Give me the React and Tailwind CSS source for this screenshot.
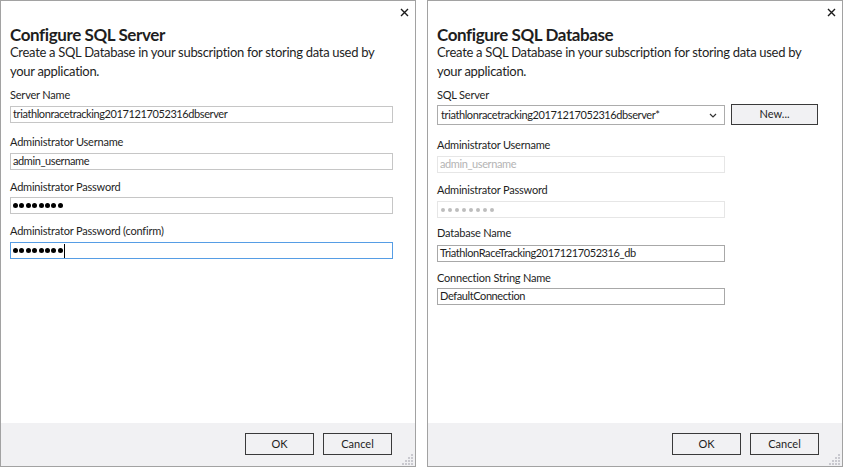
import React from 'react';

const font = { fontFamily: 'Lato, "Open Sans", sans-serif' };

function CloseX() {
  return (
    <svg width="9" height="9" viewBox="0 0 9 9" className="block">
      <path d="M1 1 L8 8 M8 1 L1 8" stroke="#1a1a1a" strokeWidth="1.4" />
    </svg>
  );
}

function Grip() {
  const dots = [
    [9, 1], [6, 4], [9, 4], [3, 7], [6, 7], [9, 7], [0, 10], [3, 10], [6, 10], [9, 10],
  ];
  return (
    <svg width="12" height="12" viewBox="0 0 12 12" className="absolute right-[1px] bottom-[1px]">
      {dots.map(([x, y], i) => (
        <rect key={i} x={x} y={y} width="2" height="2" fill="#c9c9cf" />
      ))}
    </svg>
  );
}

function Dots({ muted }) {
  return (
    <span className={`flex ${muted ? 'gap-[3px] ml-[1px]' : 'gap-[1.4px]'}`}>
      {[0, 1, 2, 3, 4, 5, 6, 7].map((i) => (
        <span
          key={i}
          className={muted ? 'w-[4px] h-[4px] rounded-full bg-[#bdbdbd]' : 'w-[5px] h-[5px] rounded-full bg-black'}
        />
      ))}
    </span>
  );
}

function Label({ children, className = '' }) {
  return (
    <div className={`text-[11px] leading-[14px] tracking-[-0.2px] text-[#1e1e1e] ${className}`}>{children}</div>
  );
}

function Field({ children, className = '' }) {
  return (
    <div
      className={`h-[17px] border bg-white flex items-center px-[2px] text-[11px] tracking-[-0.4px] text-[#1e1e1e] ${className}`}
    >
      {children}
    </div>
  );
}

function Footer() {
  return (
    <div className="relative h-[43px] bg-[#f1f1f3] flex justify-end items-start pt-[10px] pr-[23px] gap-[9px]">
      <button className="w-[69px] h-[22px] border border-[#3a3a3a] bg-[#f1f1f3] text-[11px] text-[#1e1e1e]">OK</button>
      <button className="w-[69px] h-[22px] border border-[#3a3a3a] bg-[#f1f1f3] text-[11px] text-[#1e1e1e]">Cancel</button>
      <Grip />
    </div>
  );
}

function Header({ title }) {
  return (
    <>
      <div className="flex justify-end pr-[6px] pt-[7px] h-[25px]">
        <CloseX />
      </div>
      <div className="pl-[9px] pr-[20px]">
        <h1 className="text-[17px] leading-[18px] font-bold tracking-[-0.4px] text-[#1e1e1e]">{title}</h1>
        <p className="text-[13px] leading-[19px] tracking-[-0.3px] text-[#1e1e1e] mt-[-1px]">
          Create a SQL Database in your subscription for storing data used by your application.
        </p>
      </div>
    </>
  );
}

function ServerDialog() {
  return (
    <div className="w-[416px] h-[467px] border border-[#a2a2a2] bg-white flex flex-col">
      <div className="flex-1">
        <Header title="Configure SQL Server" />
        <div className="px-[9px] mt-[7px]">
          <Label>Server Name</Label>
          <Field className="w-[383px] border-[#c6c6c6] mt-[4px]">triathlonracetracking20171217052316dbserver</Field>
          <Label className="mt-[12px]">Administrator Username</Label>
          <Field className="w-[383px] border-[#c6c6c6] mt-[4px]">admin_username</Field>
          <Label className="mt-[10px]">Administrator Password</Label>
          <Field className="w-[383px] border-[#c6c6c6] mt-[3px]"><Dots /></Field>
          <Label className="mt-[10px]">Administrator Password (confirm)</Label>
          <Field className="w-[383px] border-[#569de5] mt-[4px]">
            <Dots />
            <span className="w-px h-[14px] bg-black ml-[1px]" />
          </Field>
        </div>
      </div>
      <Footer />
    </div>
  );
}

function DatabaseDialog() {
  return (
    <div className="w-[416px] h-[467px] border border-[#a2a2a2] bg-white flex flex-col">
      <div className="flex-1">
        <Header title="Configure SQL Database" />
        <div className="px-[9px] mt-[7px]">
          <Label>SQL Server</Label>
          <div className="flex items-start gap-[6px] mt-[3px]">
            <div className="w-[288px] h-[20px] border border-[#acacac] bg-white flex items-center justify-between px-[3px] text-[11px] tracking-[-0.4px] text-[#1e1e1e]">
              <span>triathlonracetracking20171217052316dbserver*</span>
              <svg width="8" height="5" viewBox="0 0 8 5" className="mr-[4px]">
                <path d="M1 1 L4 4 L7 1" stroke="#333" strokeWidth="1.2" fill="none" />
              </svg>
            </div>
            <button className="w-[87px] h-[21px] mt-[-1px] border border-[#3a3a3a] bg-[#f1f1f3] text-[11px] text-[#1e1e1e]">
              New...
            </button>
          </div>
          <Label className="mt-[13px]">Administrator Username</Label>
          <Field className="w-[288px] border-[#e6e6e6] mt-[4px]">
            <span className="text-[#b4b4b4]">admin_username</span>
          </Field>
          <Label className="mt-[10px]">Administrator Password</Label>
          <Field className="w-[288px] border-[#e6e6e6] mt-[4px]"><Dots muted /></Field>
          <Label className="mt-[8px]">Database Name</Label>
          <Field className="w-[288px] border-[#a8a8a8] mt-[5px]">TriathlonRaceTracking20171217052316_db</Field>
          <Label className="mt-[9px]">Connection String Name</Label>
          <Field className="w-[288px] border-[#a8a8a8] mt-[3px]">DefaultConnection</Field>
        </div>
      </div>
      <Footer />
    </div>
  );
}

export default function App() {
  return (
    <div className="w-[843px] h-[467px] bg-white flex gap-[11px] overflow-hidden" style={font}>
      <ServerDialog />
      <DatabaseDialog />
    </div>
  );
}
